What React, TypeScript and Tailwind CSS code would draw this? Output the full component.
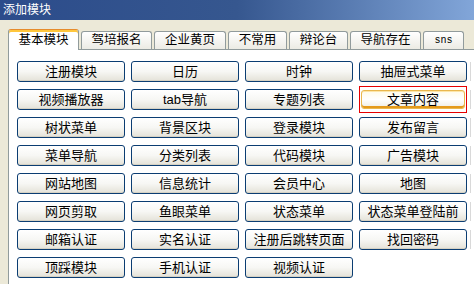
import React from "react";

const rows: string[][] = [
  ["注册模块", "日历", "时钟", "抽屉式菜单"],
  ["视频播放器", "tab导航", "专题列表", "文章内容"],
  ["树状菜单", "背景区块", "登录模块", "发布留言"],
  ["菜单导航", "分类列表", "代码模块", "广告模块"],
  ["网站地图", "信息统计", "会员中心", "地图"],
  ["网页剪取", "鱼眼菜单", "状态菜单", "状态菜单登陆前"],
  ["邮箱认证", "实名认证", "注册后跳转页面", "找回密码"],
  ["顶踩模块", "手机认证", "视频认证"],
];

const tabs = ["驾培报名", "企业黄页", "不常用", "辩论台", "导航存在"];
const tabW: Record<string, string> = {
  驾培报名: "w-[71px]",
  企业黄页: "w-[72px]",
  不常用: "w-[59px]",
  辩论台: "w-[59px]",
  导航存在: "w-[71px]",
};

function Btn({ label, hot }: { label: string; hot?: boolean }) {
  if (hot) {
    return (
      <div className="relative w-[108px] h-[21px]">
        <div className="absolute inset-x-0 -top-[3px] -bottom-[3px] border border-[#e60000]" />
        <div className="absolute left-[2px] right-[2px] top-[1px] bottom-[1px] rounded-[3px] border border-[#e9b74e] bg-linear-to-b from-[#fffbe9] via-white to-[#eeece2] shadow-[inset_0_-2px_0_#e59a1b,inset_0_1px_0_#fde6a8] flex items-center justify-center text-[13px] leading-none text-black">
          {label}
        </div>
      </div>
    );
  }
  return (
    <div className="w-[108px] h-[21px] rounded-[3px] border border-[#0b3d72] bg-linear-to-b from-white via-[#f7f7f4] to-[#e4e2d8] shadow-[inset_0_-1px_0_#d6d2c4] flex items-center justify-center text-[13px] leading-none text-black">
      {label}
    </div>
  );
}

export default function App() {
  return (
    <div
      className="w-[474px] h-[284px] bg-[#ece9d8] overflow-hidden flex flex-col"
      style={{ fontFamily: '"Liberation Sans", "Noto Sans CJK SC", sans-serif' }}
    >
      <div className="h-[20px] shrink-0 bg-linear-to-r from-[#2c4c8b] via-[#36578f] via-50% to-[#82a6d9] text-white text-[12px] leading-[20px] pl-[3px]">
        添加模块
      </div>
      <div className="h-[30px] shrink-0 ml-[8px] flex items-end gap-[2px] border-b border-[#919b9c]">
        <div className="relative z-10 -mb-px w-[71px] h-[21px] bg-white border-x border-[#919b9c] border-t border-t-[#e68b2c] rounded-t-[3px] shadow-[inset_0_2px_0_#ffc73c] flex items-center justify-center text-[12.5px] leading-none text-black">
          基本模块
        </div>
        {tabs.map((t) => (
          <div
            key={t}
            className={`${tabW[t]} h-[18px] bg-linear-to-b from-white to-[#ecebe4] border-x border-t border-[#919b9c] rounded-t-[3px] flex items-center justify-center text-[12.5px] leading-none text-black`}
          >
            {t}
          </div>
        ))}
        <div
          className="w-[41px] h-[18px] bg-linear-to-b from-white to-[#ecebe4] border-x border-t border-[#919b9c] rounded-t-[3px] flex items-center justify-center text-[10px] leading-none text-black"
          style={{ fontFamily: '"Liberation Mono", monospace' }}
        >
          sns
        </div>
      </div>
      <div className="flex-1 ml-[8px] border-l border-[#919b9c] bg-white pt-[11px] pl-[8px] flex flex-col gap-[7px]">
        {rows.map((r, i) => (
          <div key={i} className="flex items-center gap-[6px]">
            {r.map((l) => (
              <Btn key={l} label={l} hot={l === "文章内容"} />
            ))}
            {r.length === 4 && <div className="ml-[-3px] w-px h-[19px] bg-[#d9d9d9]" />}
          </div>
        ))}
      </div>
    </div>
  );
}
